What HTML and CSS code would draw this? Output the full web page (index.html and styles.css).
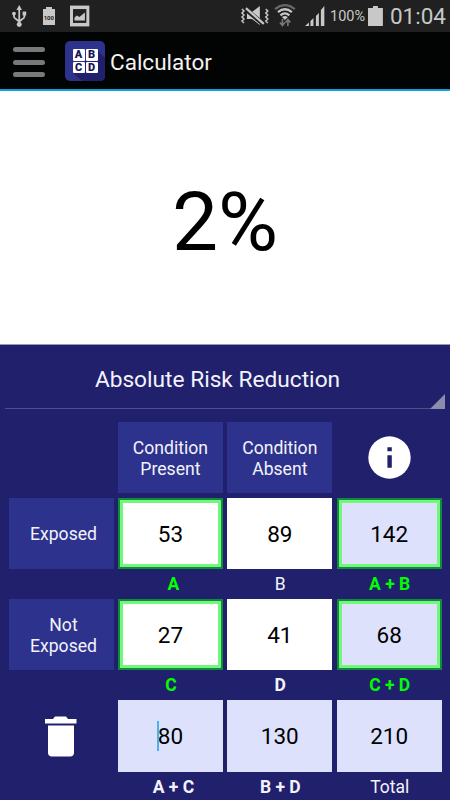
FILE: index.html
```
<!DOCTYPE html>
<html lang="en">
<head>
<meta charset="UTF-8">
<meta name="viewport" content="width=device-width, initial-scale=1.0">
<title>Calculator</title>
<link rel="stylesheet" href="styles.css">
</head>
<body>
    <div class="status-bar">
        <svg class="usb" width="16" height="24" viewBox="0 0 16 24">
            <g fill="none" stroke="#c8c8c8" stroke-width="1.800">
                <path d="M8.300 4v16M3 9v3.500q0 1.500 2 2.500l3.300 2.500M13.500 8v4.500q0 1.500-2 2.500l-3.200 2.500"/>
            </g>
            <g fill="#c8c8c8">
                <path d="M8.300 1l2.800 5H5.500z"/>
                <circle cx="8.300" cy="20.500" r="2.500"/>
                <circle cx="3" cy="9.500" r="1.900"/>
                <path d="M11.700 7.500h3.600v4h-3.600z"/>
            </g>
        </svg>
        <div class="battery-note">100</div>
        <svg class="picture" width="20" height="22" viewBox="0 0 20 22">
            <path d="M0 .5h19.500v21H0z" fill="#c8c8c8"/>
            <path d="M3 4h13.500v14H3z" fill="#222"/>
            <path d="M4.500 15.500v-3l2.500-2 2.500 1.500 5.500-4.500v8z" fill="#c8c8c8"/>
        </svg>
        <svg class="mute" width="30" height="20" viewBox="0 0 30 20">
            <path d="M7 6h5l8-6v19l-8-6H7z" fill="#c8c8c8"/>
            <path d="M6 3.500l18 15" stroke="#222" stroke-width="4.500"/>
            <path d="M6 2l18 16" stroke="#c8c8c8" stroke-width="2.200"/>
            <path d="M2 3l2 2-2 2 2 2-2 2 2 2-2 2 2 2M26 3l2 2-2 2 2 2-2 2 2 2-2 2 2 2" fill="none" stroke="#c8c8c8" stroke-width="1.500"/>
        </svg>
        <svg class="wifi" width="22" height="23" viewBox="0 0 22 23">
            <g fill="none" stroke-width="2.300">
                <path d="M1 5q10-8 20 0" stroke="#666"/>
                <path d="M4 8q7-5.500 14 0M6.500 11.300q4.500-3.800 9 0" stroke="#c8c8c8"/>
            </g>
            <path d="M8 13q3-2 6 0l-3 3z" fill="#c8c8c8"/>
            <path d="M8.500 15v6M6 18.500l2.500 3 2.500-3M14 22v-6M11.500 18.500l2.500-3 2.500 3" fill="none" stroke="#777" stroke-width="1.700"/>
        </svg>
        <svg class="signal" width="20" height="20" viewBox="0 0 20 20">
            <path d="M0 20l4-3.500V20zM5.500 20v-5l3-3v8zM11 20V10l3-3v13zM16 20V4l3.500-4v20z" fill="#c8c8c8"/>
        </svg>
        <span class="percent">100%</span>
        <svg class="battery" width="15" height="20" viewBox="0 0 15 20">
            <path d="M0 2h5V0h5v2h5v18H0z" fill="#c8c8c8"/>
        </svg>
        <span class="clock">01:04</span>
    </div>

    <div class="app-bar">
        <div class="menu">
            <span></span>
            <span></span>
            <span></span>
        </div>
        <div class="logo">
            <svg class="logo-shadow" width="40" height="40" viewBox="0 0 40 40">
                <path d="M32 9l8 8v18q0 5-5 5H17l-9-8z" fill="#21206c"/>
            </svg>
            <div class="logo-grid">
                <span>A</span>
                <span>B</span>
                <span>C</span>
                <span>D</span>
            </div>
        </div>
        <span class="title">Calculator</span>
    </div>

    <div class="result">2%</div>

    <div class="panel">
        <div class="spinner">Absolute Risk Reduction</div>
        <div class="table">
            <div></div>
            <div class="head">Condition<br>Present</div>
            <div class="head">Condition<br>Absent</div>
            <div class="icon">
                <svg width="43" height="43" viewBox="0 0 43 43">
                    <circle cx="21.500" cy="21.500" r="21.200" fill="#fff"/>
                    <path d="M19.400 11.300h4.400v4h-4.400zM19.400 19.300h4.400v12.400h-4.400z" fill="#21206c"/>
                </svg>
            </div>

            <div class="head side">Exposed</div>
            <div class="cell active">53</div>
            <div class="cell">89</div>
            <div class="cell total active">142</div>

            <div></div>
            <div class="label first on">A</div>
            <div class="label plain">B</div>
            <div class="label on">A + B</div>

            <div class="head side">Not<br>Exposed</div>
            <div class="cell active">27</div>
            <div class="cell">41</div>
            <div class="cell total active">68</div>

            <div></div>
            <div class="label on">C</div>
            <div class="label">D</div>
            <div class="label on">C + D</div>

            <div class="icon">
                <svg width="32" height="41" viewBox="0 0 32 41">
                    <path d="M0 3h8l2-2.500h11L23 3h8.500v4.500H0z" fill="#fff"/>
                    <path d="M3 9.500h26v27q0 4-4 4H7q-4 0-4-4z" fill="#fff"/>
                </svg>
            </div>
            <div class="cell total"><span class="caret"></span>80</div>
            <div class="cell total">130</div>
            <div class="cell total">210</div>

            <div></div>
            <div class="label first">A + C</div>
            <div class="label">B + D</div>
            <div class="label plain">Total</div>
        </div>
    </div>
</body>
</html>
```
FILE: styles.css
```
* {
    box-sizing: border-box;
}
body {
    margin: 0;
    width: 450px;
    height: 800px;
    overflow: hidden;
    display: flex;
    flex-direction: column;
    font-family: Roboto, "Liberation Sans", sans-serif;
    background-color: #fff;
}

.status-bar {
    height: 32px;
    background-color: #202020;
    color: #c8c8c8;
    display: flex;
    align-items: center;
    padding: 0 4px 1px 11px;
}
.battery-note {
    position: relative;
    width: 12px;
    height: 16px;
    margin: 2px 0 0 16px;
    background-color: #c8c8c8;
    color: #222;
    font-size: 6px;
    font-weight: bold;
    line-height: 17px;
    text-align: center;
}
.battery-note::before {
    content: "";
    position: absolute;
    left: 3px;
    top: -2px;
    width: 6px;
    height: 2px;
    background-color: #c8c8c8;
}
.picture {
    margin-left: 15px;
}
.mute {
    margin-left: 150px;
}
.wifi {
    margin-left: 5px;
}
.signal {
    margin: 1px 0 0 9px;
}
.percent {
    width: 35px;
    margin: 2px 0 0 5px;
    font-size: 14.5px;
    white-space: nowrap;
}
.battery {
    margin-left: 3px;
}
.clock {
    margin-left: 7px;
    font-size: 22.5px;
    line-height: 30px;
}

.app-bar {
    height: 59px;
    background-color: #020303;
    border-bottom: 2px solid #0ba5dc;
    display: flex;
    align-items: center;
    padding: 0 13px 0;
}
.menu {
    width: 32px;
    height: 30px;
    display: flex;
    flex-direction: column;
    justify-content: space-between;
    margin-top: 3px;
}
.menu span {
    height: 5px;
    border-radius: 3px;
    background-color: #77797b;
}
.logo {
    position: relative;
    width: 40px;
    height: 40px;
    margin: 1px 0 0 20px;
    border-radius: 5px;
    background-color: #2d328c;
    display: flex;
    align-items: center;
    justify-content: center;
}
.logo-shadow {
    position: absolute;
    left: 0;
    top: 0;
}
.logo-grid {
    position: relative;
    display: grid;
    grid-template-columns: 12px 12px;
    grid-template-rows: 11.5px 11.5px;
    gap: 1px;
}
.logo-grid span {
    background-color: #fff;
    color: #15145c;
    font-size: 11px;
    font-weight: 900;
    line-height: 12px;
    text-align: center;
    border-radius: 1px;
}
.title {
    margin: 3px 0 0 5px;
    color: #f3f3f3;
    font-size: 22.5px;
}

.result {
    height: 254px;
    border-bottom: 1px solid #9a9aae;
    padding-top: 8px;
    display: flex;
    align-items: center;
    justify-content: center;
    font-size: 82px;
    color: #000;
}

.panel {
    flex: 1;
    background-color: #21206c;
    color: #f3f3fb;
}
.spinner {
    position: relative;
    height: 64px;
    margin: 0 5px;
    padding-right: 15px;
    padding-top: 6px;
    border-bottom: 1px solid #504f8c;
    display: flex;
    align-items: center;
    justify-content: center;
    font-size: 22.7px;
}
.spinner::after {
    content: "";
    position: absolute;
    right: 0;
    bottom: -1px;
    border-left: 15px solid transparent;
    border-bottom: 15px solid #8d8cad;
}
.table {
    display: grid;
    grid-template-columns: repeat(4, 105px);
    grid-template-rows: 71px 71px 20px 71px 20px 72px 19px;
    column-gap: 4.400px;
    row-gap: 5px;
    padding: 13px 0 0 8.500px;
}
.head {
    background-color: #2d328c;
    display: flex;
    align-items: center;
    justify-content: center;
    text-align: center;
    font-size: 17.6px;
    line-height: 21px;
    padding-top: 3px;
}
.side {
    padding-top: 2px;
    padding-left: 5px;
}
.cell {
    position: relative;
    background-color: #fff;
    color: #000;
    display: flex;
    align-items: center;
    justify-content: center;
    font-size: 22.5px;
}
.total {
    background-color: #dde1fb;
}
.active {
    border: 2px solid #118a3c;
    box-shadow: inset 0 0 0 3px #72f67c;
}
.caret {
    position: absolute;
    left: 39px;
    top: 21px;
    width: 2px;
    height: 30px;
    background-color: #46b3f0;
}
.label {
    text-align: center;
    font-size: 17.5px;
    font-weight: bold;
    line-height: 20px;
    padding-left: 1px;
}
.first {
    padding-left: 6px;
}
.plain {
    font-weight: normal;
}
.on {
    color: #0f0;
}
.icon {
    display: flex;
    align-items: center;
    justify-content: center;
}
```
